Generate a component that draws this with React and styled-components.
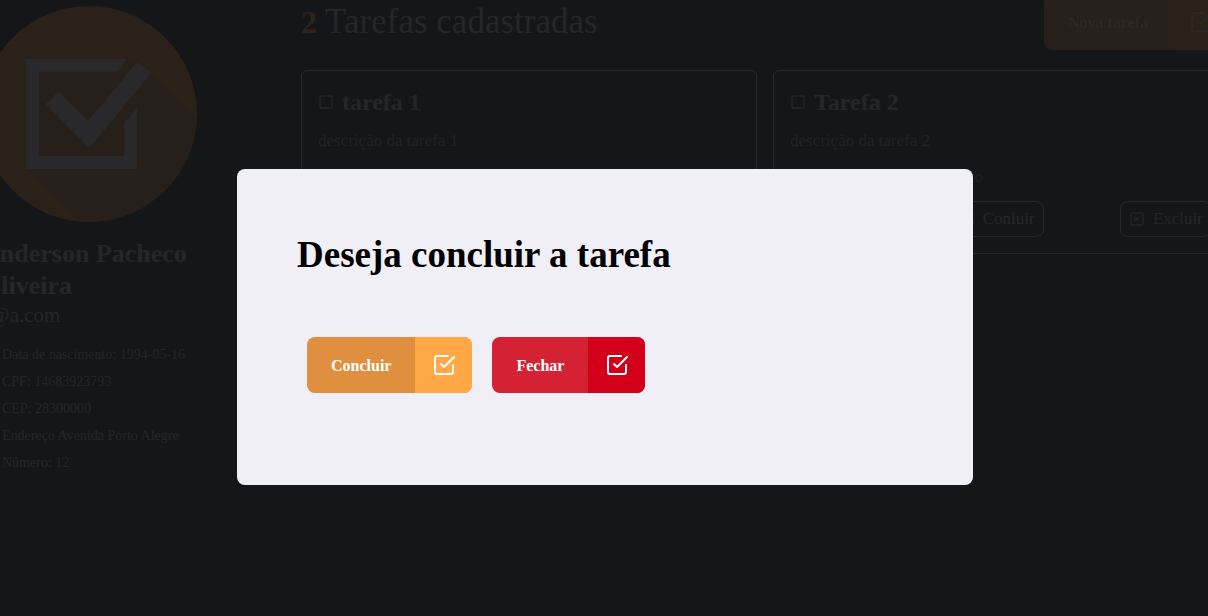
import React from "react";
import styled, { createGlobalStyle } from "styled-components";
import { FiCheckSquare, FiEdit, FiSquare, FiXSquare } from "react-icons/fi";

const GlobalStyle = createGlobalStyle`
  *, *::before, *::after { box-sizing: border-box; }
  body {
    margin: 0;
    overflow: hidden;
    background: #151618;
    color: #252628;
    font-family: "Liberation Serif", serif;
  }
  h1, h2, h3, p, ul { margin: 0; padding: 0; }
  button { font-family: inherit; cursor: pointer; }
`;

const Page = styled.div`
  display: flex;
  justify-content: center;
  height: 100vh;
  padding-left: 2px;
  overflow: hidden;
`;

const Shell = styled.div`
  display: grid;
  grid-template-columns: 320px 1fr;
  flex: none;
  width: 100%;
  min-width: 1248px;
  max-width: 1248px;
  margin-top: -6px;
`;

const Sidebar = styled.aside`
  width: 216px;
  padding-top: 12px;
`;

const Logo = styled.svg`
  display: block;
  width: 100%;
  margin-bottom: 16px;
`;

const UserName = styled.h2`
  font-size: 26px;
  line-height: 32px;
`;

const Email = styled.p`
  font-size: 21px;
  line-height: 26px;
`;

const Details = styled.ul`
  margin-top: 13px;
  padding-left: 21px;
  font-size: 14px;
  line-height: 27px;
  white-space: nowrap;
`;

const Header = styled.header`
  display: flex;
  align-items: center;
  justify-content: space-between;
  margin-bottom: 20px;
`;

const PageTitle = styled.h1`
  font-size: 35px;
  font-weight: 400;
  line-height: 40px;
  color: #252628;
`;

const Count = styled.strong`
  color: #2f241b;
  font-size: 32px;
`;

const tones = {
  dimmed: { label: "#261f1a", icon: "#2a2119", text: "#2c2724" },
  orange: { label: "#e08f3e", icon: "#ffa845", text: "#ffffff" },
  red: { label: "#d52134", icon: "#d40019", text: "#ffffff" },
};

const SplitButton = styled.button`
  display: flex;
  height: 56px;
  padding: 0;
  overflow: hidden;
  border: 0;
  border-radius: 8px;
  background: ${({ $tone }) => tones[$tone].label};
  color: ${({ $tone }) => tones[$tone].text};
  font-size: 16px;
  font-weight: 700;
`;

const ButtonLabel = styled.span`
  align-self: center;
  padding: 2px 24px 0;
`;

const ButtonIcon = styled.span`
  display: flex;
  align-items: center;
  justify-content: center;
  width: 57px;
  height: 100%;
  background: ${({ $tone }) => tones[$tone].icon};
`;

const Cards = styled.section`
  display: grid;
  grid-template-columns: 1fr 1fr;
  gap: 16px;
`;

const Card = styled.article`
  display: flex;
  flex-direction: column;
  gap: 12px;
  padding: 16px;
  border: 1px solid #29292c;
  border-radius: 6px;
`;

const CardTitle = styled.h3`
  display: flex;
  align-items: center;
  gap: 8px;
  font-size: 24px;
  line-height: 30px;
`;

const CardText = styled.p`
  font-size: 17px;
  line-height: 24px;
  color: #222325;
`;

const CardActions = styled.div`
  display: flex;
  justify-content: space-between;
`;

const OutlineButton = styled.button`
  display: flex;
  align-items: center;
  gap: 8px;
  height: 36px;
  padding: 0 8px;
  border: 1px solid #29292c;
  border-radius: 8px;
  background: transparent;
  color: inherit;
  font-size: 17px;
`;

const Overlay = styled.div`
  position: fixed;
  inset: 0;
  display: flex;
  align-items: center;
  justify-content: center;
  padding: 38px 0 0 2px;
`;

const Modal = styled.section`
  width: 100%;
  max-width: 736px;
  padding: 60px;
  border-radius: 8px;
  background: #f0eff5;
`;

const ModalTitle = styled.h2`
  color: #000000;
  font-size: 37px;
  line-height: 52px;
`;

const ModalActions = styled.div`
  display: flex;
  gap: 20px;
  padding: 56px 10px 32px;
`;

function ActionButton({ tone, children }) {
  return (
    <SplitButton type="button" $tone={tone}>
      <ButtonLabel>{children}</ButtonLabel>
      <ButtonIcon $tone={tone}>
        <FiCheckSquare size={24} />
      </ButtonIcon>
    </SplitButton>
  );
}

function TaskCard({ title, description }) {
  return (
    <Card>
      <CardTitle>
        <FiSquare size={16} />
        {title}
      </CardTitle>
      <CardText>{description}</CardText>
      <CardText>Status: tarefa em andamento</CardText>
      <CardActions>
        <OutlineButton type="button">
          <FiEdit size={16} />
          Editar
        </OutlineButton>
        <OutlineButton type="button">
          <FiCheckSquare size={16} />
          Conluir
        </OutlineButton>
        <OutlineButton type="button">
          <FiXSquare size={16} />
          Excluir
        </OutlineButton>
      </CardActions>
    </Card>
  );
}

function CheckLogo() {
  return (
    <Logo viewBox="0 0 216 216" aria-hidden="true">
      <defs>
        <clipPath id="disc">
          <circle cx="108" cy="108" r="108" />
        </clipPath>
      </defs>
      <circle cx="108" cy="108" r="108" fill="#2a2119" />
      <path
        clipPath="url(#disc)"
        fill="#261f1a"
        d="M45 53H146L156 56L170 67L230 127V230H112L45 163Z"
      />
      <path
        fill="#29292c"
        d="M45 53H146L137 65.7H58V150H143.3V116.7L156 102.3V163H45Z"
      />
      <path
        fill="#29292c"
        d="M64.7 98.3L77 86L107.3 114.7L156.3 56L170.3 66.7L108.3 142.3Z"
      />
    </Logo>
  );
}

const details = [
  "Data de nascimento: 1994-05-16",
  "CPF: 14683923793",
  "CEP: 28300000",
  "Endereço Avenida Porto Alegre",
  "Número: 12",
];

const tasks = [
  { title: "tarefa 1", description: "descrição da tarefa 1" },
  { title: "Tarefa 2", description: "descrição da tarefa 2" },
];

export default function App() {
  return (
    <>
      <GlobalStyle />
      <Page>
        <Shell>
          <Sidebar>
            <CheckLogo />
            <UserName>Anderson Pacheco Oliveira</UserName>
            <Email>a@a.com</Email>
            <Details>
              {details.map((item) => (
                <li key={item}>{item}</li>
              ))}
            </Details>
          </Sidebar>
          <main>
            <Header>
              <PageTitle>
                <Count>{tasks.length}</Count> Tarefas cadastradas
              </PageTitle>
              <ActionButton tone="dimmed">Nova tarefa</ActionButton>
            </Header>
            <Cards>
              {tasks.map((task) => (
                <TaskCard key={task.title} {...task} />
              ))}
            </Cards>
          </main>
        </Shell>
      </Page>
      <Overlay>
        <Modal role="dialog" aria-modal="true" aria-labelledby="modal-title">
          <ModalTitle id="modal-title">Deseja concluir a tarefa</ModalTitle>
          <ModalActions>
            <ActionButton tone="orange">Concluir</ActionButton>
            <ActionButton tone="red">Fechar</ActionButton>
          </ModalActions>
        </Modal>
      </Overlay>
    </>
  );
}
